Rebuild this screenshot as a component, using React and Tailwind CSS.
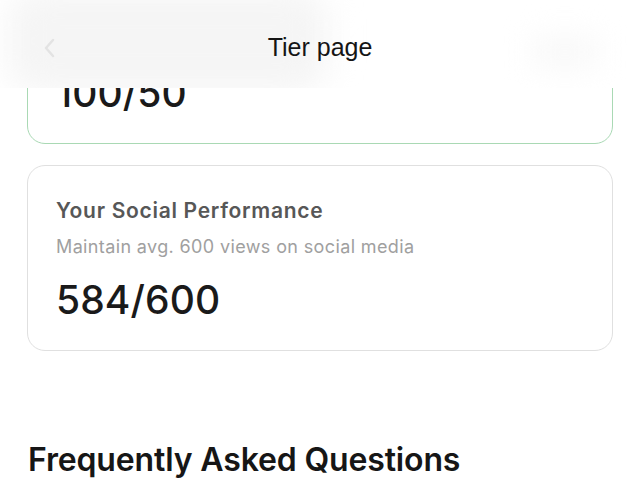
const Card = ({ title, note, value, green }) => (
    <div
        className={`rounded-[18px] border bg-white px-7 pt-[32px] pb-[28px] ${
            green ? 'border-[#a9d9b4]' : 'border-[#e0e0e0]'
        }`}
    >
        <div className="text-[21px] leading-[26px] font-semibold tracking-[0.7px] text-[#575757]">{title}</div>
        <div className="mt-[11px] text-[18px] leading-[24px] tracking-[0.37px] text-[#a0a0a0]">{note}</div>
        <div className="mt-[19px] text-[39px] leading-[44px] font-medium tracking-[0.1px] text-[#1a1a1a]">{value}</div>
    </div>
);

const App = () => {
    return (
        <div className="relative h-[502px] w-[640px] overflow-hidden bg-white font-['Inter',sans-serif]">
            {/* scrolled content */}
            <div className="-mt-[42px] px-[27px]">
                <div className="flex flex-col gap-[21px]">
                    <Card
                        green
                        title="Your Referrals"
                        note="Refer 50 friends to unlock this tier"
                        value="100/50"
                    />
                    <Card
                        title="Your Social Performance"
                        note="Maintain avg. 600 views on social media"
                        value="584/600"
                    />
                </div>
                <h2 className="mt-[89px] pl-px text-[32px] leading-[40px] font-semibold tracking-[-0.15px] text-[#161616]">
                    Frequently Asked Questions
                </h2>
            </div>

            {/* sticky header */}
            <div className="absolute inset-x-0 top-0 h-[88px] overflow-hidden bg-white">
                <div className="absolute left-[8px] top-[-10px] h-[102px] w-[320px] rounded-[30px] bg-[#f5f5f5] blur-lg" />
                <div className="absolute right-[40px] top-[32px] h-[40px] w-[70px] rounded-lg bg-[#fafafa] blur-md" />
                <div className="relative flex h-full items-center justify-between px-[42px] pt-[8px]">
                    <svg width="14" height="22" viewBox="0 0 14 22" fill="none" className="opacity-60">
                        <path d="M11 3L4 11l7 8" stroke="#d8d8d8" strokeWidth="2.5" strokeLinecap="round" strokeLinejoin="round" />
                    </svg>
                    <div className="font-['Liberation_Sans',Arial,sans-serif] text-[25px] text-[#151515]">Tier page</div>
                    <div className="w-[14px]" />
                </div>
            </div>
        </div>
    );
};

export default App;
